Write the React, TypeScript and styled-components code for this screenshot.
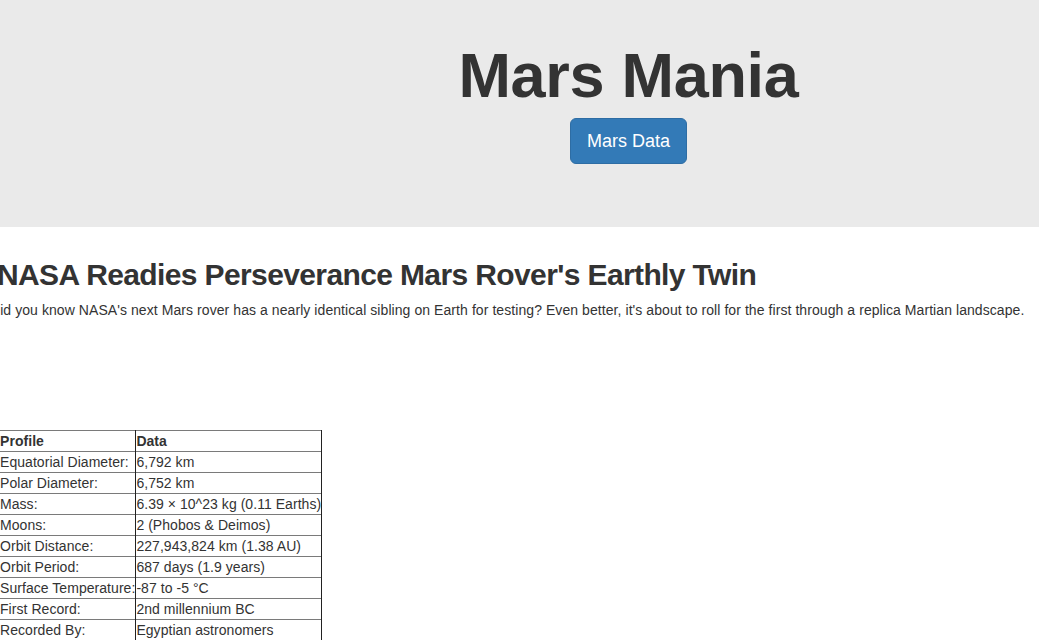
import React from "react";
import styled, { createGlobalStyle } from "styled-components";

const GlobalStyle = createGlobalStyle`
  html, body {
    margin: 0;
    padding: 0;
    background: #ffffff;
    overflow: hidden;
  }
  body {
    font-family: "Liberation Sans", Arial, Helvetica, sans-serif;
    color: #333333;
    font-size: 14px;
    line-height: 20px;
  }
`;

const Jumbotron = styled.header`
  box-sizing: border-box;
  height: 227px;
  background: #eaeaea;
  padding: 41px 0 0 218px;
  display: flex;
  flex-direction: column;
  align-items: center;
`;

const Title = styled.h1`
  margin: 0;
  font-size: 63px;
  line-height: 69px;
  font-weight: 700;
  color: #333333;
  letter-spacing: -0.3px;
`;

const DataButton = styled.button`
  margin-top: 8px;
  box-sizing: border-box;
  height: 46px;
  padding: 10px 16px;
  font-family: inherit;
  font-size: 18px;
  line-height: 24px;
  color: #ffffff;
  background: #337ab7;
  border: 1px solid #2e6da4;
  border-radius: 6px;
  cursor: pointer;
`;

const Article = styled.section`
  margin-left: -10px;
  padding-top: 31px;
`;

const Headline = styled.h2`
  margin: 0 0 9px 7px;
  font-size: 30px;
  line-height: 33px;
  font-weight: 700;
  letter-spacing: -0.62px;
  color: #333333;
  white-space: nowrap;
`;

const Teaser = styled.p`
  margin: 0;
  font-size: 14px;
  line-height: 20px;
  letter-spacing: 0.07px;
  white-space: nowrap;
`;

const FactsTable = styled.table`
  margin: 110px 0 0 9px;
  border-collapse: collapse;
  border: 1px solid #222222;
  font-size: 14px;
  line-height: 20px;
  letter-spacing: 0.05px;
  color: #333333;
`;

const Cell = styled.td<{ $head?: boolean }>`
  padding: 0;
  border-top: 1px solid #7a7a7a;
  border-left: 1px solid #222222;
  border-right: 1px solid #222222;
  font-weight: ${(p) => (p.$head ? 700 : 400)};
  white-space: nowrap;
  text-align: left;
`;

const facts: [string, string][] = [
  ["Equatorial Diameter:", "6,792 km"],
  ["Polar Diameter:", "6,752 km"],
  ["Mass:", "6.39 × 10^23 kg (0.11 Earths)"],
  ["Moons:", "2 (Phobos & Deimos)"],
  ["Orbit Distance:", "227,943,824 km (1.38 AU)"],
  ["Orbit Period:", "687 days (1.9 years)"],
  ["Surface Temperature:", "-87 to -5 °C"],
  ["First Record:", "2nd millennium BC"],
  ["Recorded By:", "Egyptian astronomers"],
];

export default function App() {
  return (
    <>
      <GlobalStyle />
      <Jumbotron>
        <Title>Mars Mania</Title>
        <DataButton>Mars Data</DataButton>
      </Jumbotron>
      <Article>
        <Headline>NASA Readies Perseverance Mars Rover's Earthly Twin</Headline>
        <Teaser>
          Did you know NASA's next Mars rover has a nearly identical sibling on Earth for testing? Even better, it's about to roll for the first through a replica Martian landscape.
        </Teaser>
        <FactsTable>
          <tbody>
            <tr>
              <Cell $head>Profile</Cell>
              <Cell $head>Data</Cell>
            </tr>
            {facts.map(([k, v]) => (
              <tr key={k}>
                <Cell>{k}</Cell>
                <Cell>{v}</Cell>
              </tr>
            ))}
          </tbody>
        </FactsTable>
      </Article>
    </>
  );
}
